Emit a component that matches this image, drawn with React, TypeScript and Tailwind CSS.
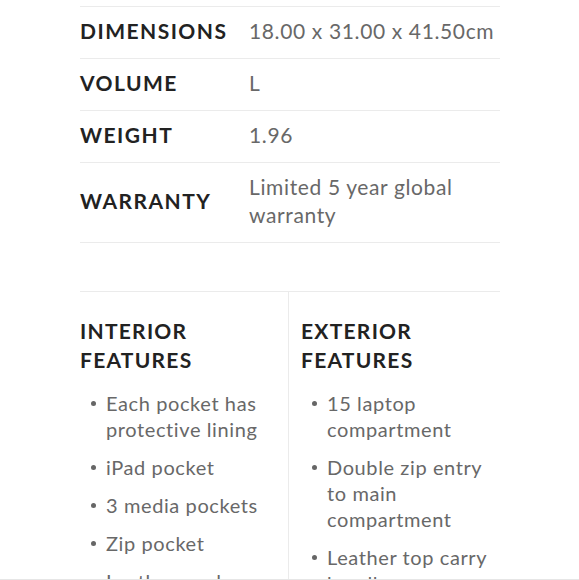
const specs = [
  { label: 'DIMENSIONS', value: '18.00 x 31.00 x 41.50cm' },
  { label: 'VOLUME', value: 'L' },
  { label: 'WEIGHT', value: '1.96' },
  { label: 'WARRANTY', value: 'Limited 5 year global warranty' },
];

const interior = [
  'Each pocket has protective lining',
  'iPad pocket',
  '3 media pockets',
  'Zip pocket',
  'Leather card holder',
];

const exterior = [
  '15 laptop compartment',
  'Double zip entry to main compartment',
  'Leather top carry handle',
];

function FeatureList({ title, items }: { title: string[]; items: string[] }) {
  return (
    <div>
      <h3 className="text-[21px] leading-[29px] font-bold tracking-[0.06em] text-[#222]">
        {title.map((t) => (
          <div key={t}>{t}</div>
        ))}
      </h3>
      <ul className="mt-4 flex flex-col gap-3">
        {items.map((item) => (
          <li key={item} className="flex text-[20px] leading-[26px] text-[#686868] tracking-[0.03em]">
            <span className="w-[26px] shrink-0 flex justify-center pt-[11px] pl-[1px]">
              <span className="block w-[5px] h-[5px] rounded-full bg-[#666]" />
            </span>
            <span>{item}</span>
          </li>
        ))}
      </ul>
    </div>
  );
}

export default function App() {
  return (
    <div
      className="h-[580px] overflow-hidden bg-white relative"
      style={{ fontFamily: 'Lato, "Open Sans", sans-serif' }}
    >
      <div className="w-[420px] ml-[80px] pt-[6px]">
        <div className="border-b border-[#ebebeb]">
          {specs.map((s) => (
            <div key={s.label} className="flex items-center border-t border-[#ebebeb] pt-[10px] pb-[13px]">
              <div className="w-[169px] shrink-0 text-[21px] font-bold tracking-[0.07em] text-[#222] leading-[28px]">
                {s.label}
              </div>
              <div className="flex-1 min-w-0 text-[21px] leading-[28px] text-[#686868] tracking-[0.03em]">{s.value}</div>
            </div>
          ))}
        </div>

        <div className="mt-12 border-t border-[#ebebeb] grid grid-cols-[209px_1fr]">
          <div className="border-r border-[#ebebeb] pt-6 pr-3">
            <FeatureList title={['INTERIOR', 'FEATURES']} items={interior} />
          </div>
          <div className="pt-6 pl-3 pr-1">
            <FeatureList title={['EXTERIOR', 'FEATURES']} items={exterior} />
          </div>
        </div>
      </div>
      <div className="absolute left-0 right-0 bottom-0 h-px bg-[#e6e6e6]" />
    </div>
  );
}
